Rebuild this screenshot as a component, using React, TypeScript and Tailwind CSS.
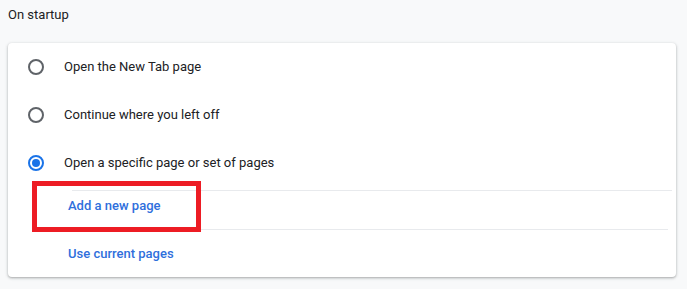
import React from "react";

const options = [
  { label: "Open the New Tab page", checked: false },
  { label: "Continue where you left off", checked: false },
  { label: "Open a specific page or set of pages", checked: true },
];

const Radio = ({ checked }: { checked: boolean }) =>
  checked ? (
    <span className="flex h-4 w-4 shrink-0 items-center justify-center rounded-full border-2 border-[#1a73e8]">
      <span className="h-2 w-2 rounded-full bg-[#1a73e8]" />
    </span>
  ) : (
    <span className="h-4 w-4 shrink-0 rounded-full border-2 border-[#5f6368]" />
  );

export default function App() {
  return (
    <div className="relative h-[289px] w-[687px] overflow-hidden bg-[#f8f9fa] font-['Roboto','Liberation_Sans',sans-serif] text-[13px] text-[#202124]">
      <div className="pl-2 pt-[5px] leading-5">On startup</div>
      <section className="ml-2 mt-[18px] w-[668px] rounded-[4px] bg-white shadow-[0_1px_2px_rgba(60,64,67,0.3),0_1px_3px_1px_rgba(60,64,67,0.12)]">
        {options.map((o) => (
          <div key={o.label} className="flex h-12 items-center gap-5 pl-5">
            <Radio checked={o.checked} />
            <span className="leading-5">{o.label}</span>
          </div>
        ))}
        <div className="mt-[3px] pl-16">
          <div className="mr-1 border-t border-[#e8eaed] pt-[5px] pb-[13px]">
            <span className="-ml-1 font-medium leading-5 text-[#2f6fdc]">Add a new page</span>
          </div>
          <div className="mr-2 border-t border-[#e8eaed] pt-[14px] pb-[13px]">
            <span className="-ml-1 font-medium leading-5 text-[#2f6fdc]">Use current pages</span>
          </div>
        </div>
      </section>
      <div className="pointer-events-none absolute left-8 top-[181px] h-[51px] w-[169px] border-[5px] border-[#ed1c24]" />
    </div>
  );
}
